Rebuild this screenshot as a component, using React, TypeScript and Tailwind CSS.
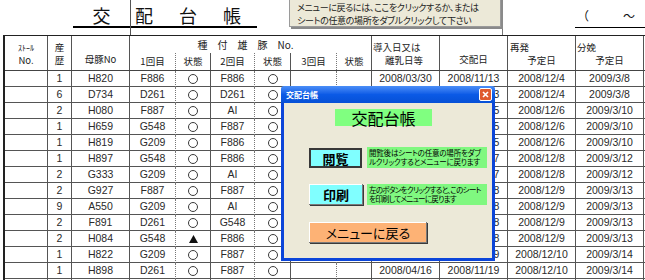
import React from 'react';

type Mark = 'o' | 't';

interface SowRow {
  parity: string;
  sow: string;
  first: string;
  firstMark: Mark;
  second: string;
  intro: string;
  mated: string;
  recheck: string;
  due: string;
}

const gridCols =
  'grid grid-cols-[43px_24px_58px_46px_35px_44px_36px_46px_35px_68px_68px_68px_68px]';

// rows 2-12 of 導入日 sit fully behind the menu dialog, so they are left blank
const sowRows: SowRow[] = [
  { parity: '1', sow: 'H820', first: 'F886', firstMark: 'o', second: 'F886', intro: '2008/03/30', mated: '2008/11/13', recheck: '2008/12/4', due: '2009/3/8' },
  { parity: '6', sow: 'D734', first: 'D261', firstMark: 'o', second: 'D261', intro: '', mated: '2008/11/13', recheck: '2008/12/4', due: '2009/3/8' },
  { parity: '2', sow: 'H080', first: 'F887', firstMark: 'o', second: 'AI', intro: '', mated: '2008/11/15', recheck: '2008/12/6', due: '2009/3/10' },
  { parity: '1', sow: 'H659', first: 'G548', firstMark: 'o', second: 'F887', intro: '', mated: '2008/11/15', recheck: '2008/12/6', due: '2009/3/10' },
  { parity: '1', sow: 'H819', first: 'G209', firstMark: 'o', second: 'F886', intro: '', mated: '2008/11/15', recheck: '2008/12/6', due: '2009/3/10' },
  { parity: '1', sow: 'H897', first: 'G548', firstMark: 'o', second: 'F886', intro: '', mated: '2008/11/17', recheck: '2008/12/8', due: '2009/3/12' },
  { parity: '2', sow: 'G333', first: 'G209', firstMark: 'o', second: 'AI', intro: '', mated: '2008/11/17', recheck: '2008/12/8', due: '2009/3/12' },
  { parity: '2', sow: 'G927', first: 'F887', firstMark: 'o', second: 'F887', intro: '', mated: '2008/11/18', recheck: '2008/12/9', due: '2009/3/13' },
  { parity: '9', sow: 'A550', first: 'G209', firstMark: 'o', second: 'AI', intro: '', mated: '2008/11/18', recheck: '2008/12/9', due: '2009/3/13' },
  { parity: '2', sow: 'F891', first: 'D261', firstMark: 'o', second: 'G548', intro: '', mated: '2008/11/18', recheck: '2008/12/9', due: '2009/3/13' },
  { parity: '2', sow: 'H084', first: 'G548', firstMark: 't', second: 'F886', intro: '', mated: '2008/11/18', recheck: '2008/12/9', due: '2009/3/13' },
  { parity: '1', sow: 'H822', first: 'G209', firstMark: 'o', second: 'F887', intro: '', mated: '2008/11/19', recheck: '2008/12/10', due: '2009/3/14' },
  { parity: '1', sow: 'H898', first: 'D261', firstMark: 'o', second: 'F887', intro: '2008/04/16', mated: '2008/11/19', recheck: '2008/12/10', due: '2009/3/14' },
];

const Circle = () => <span className="block h-[10px] w-[10px] rounded-full border border-[#3a3a3a]" />;

const Triangle = () => (
  <svg width="9" height="8" viewBox="0 0 9 8">
    <polygon points="4.5,0 9,8 0,8" fill="#111" />
  </svg>
);

const Cell: React.FC<{ children?: React.ReactNode; dotted?: boolean }> = ({ children, dotted }) => (
  <div
    className={
      dotted
        ? 'flex items-center justify-center border-r border-dotted border-[#777]'
        : 'flex items-center justify-center border-r border-[#555]'
    }
  >
    {children}
  </div>
);

const DataRow: React.FC<{ row?: SowRow }> = ({ row }) => (
  <div className={`${gridCols} h-[16px] border-b border-[#555]`}>
    <Cell />
    <Cell>{row?.parity}</Cell>
    <Cell>{row?.sow}</Cell>
    <Cell dotted>{row?.first}</Cell>
    <Cell>{row ? row.firstMark === 't' ? <Triangle /> : <Circle /> : null}</Cell>
    <Cell dotted>{row?.second}</Cell>
    <Cell>{row ? <Circle /> : null}</Cell>
    <Cell dotted />
    <Cell />
    <Cell>{row?.intro}</Cell>
    <Cell>{row?.mated}</Cell>
    <Cell>{row?.recheck}</Cell>
    <Cell>{row?.due}</Cell>
  </div>
);

const HeaderBar = () => (
  <div
    className={`${gridCols} grid-rows-[17px_17px] border-b border-[#444] font-['Noto_Sans_CJK_JP',sans-serif] text-[9.5px] leading-[13px] text-[#222] [font-feature-settings:'palt']`}
  >
    <div className="row-span-2 flex flex-col items-center border-r border-[#555] pt-[5px]">
      <span className="text-[8px]">ｽﾄｰﾙ</span>
      <span>No.</span>
    </div>
    <div className="row-span-2 flex flex-col items-center border-r border-[#555] pt-[5px]">
      <span>産</span>
      <span>歴</span>
    </div>
    <div className="row-span-2 flex flex-col items-center justify-end border-r border-[#555] pb-[4px]">
      <span>母豚No</span>
    </div>
    <div className="col-span-6 flex items-center justify-center border-r border-[#555] pr-[10px] text-[10px]">
      種　付　雄　豚　No.
    </div>
    <div className="row-span-2 flex flex-col border-r border-[#555] pt-[5px]">
      <span className="pl-[1px]">導入日又は</span>
      <span className="pl-[13px]">離乳日等</span>
    </div>
    <div className="row-span-2 flex flex-col items-center justify-end border-r border-[#555] pb-[4px]">
      <span>交配日</span>
    </div>
    <div className="row-span-2 flex flex-col border-r border-[#555] pt-[5px]">
      <span className="pl-[2px]">再発</span>
      <span className="self-center">予定日</span>
    </div>
    <div className="row-span-2 flex flex-col border-r border-[#555] pt-[5px]">
      <span className="pl-[1px]">分娩</span>
      <span className="self-center">予定日</span>
    </div>
    <div className="col-start-4 row-start-2 flex items-center justify-center border-r border-dotted border-[#777]">1回目</div>
    <div className="flex items-center justify-center border-r border-[#555]">状態</div>
    <div className="flex items-center justify-center border-r border-dotted border-[#777]">2回目</div>
    <div className="flex items-center justify-center border-r border-[#555]">状態</div>
    <div className="flex items-center justify-center border-r border-dotted border-[#777]">3回目</div>
    <div className="flex items-center justify-center border-r border-[#555]">状態</div>
  </div>
);

const TitleRow = () => (
  <div className="flex h-[35px] font-['Noto_Sans_CJK_JP',sans-serif] text-[#111]">
    <div className="w-[73px]" />
    <div className="w-[57px] pt-[5px]">
      <div className="flex h-[23px] items-center justify-center border-b-2 border-black text-[18px]">交</div>
    </div>
    <div className="w-[127px] border-l border-[#555] pt-[5px]">
      <div className="flex h-[23px] items-center gap-[26px] border-b-2 border-black pl-[4px] text-[18px]">
        <span>配</span>
        <span>台</span>
        <span>帳</span>
      </div>
    </div>
    <div className="w-[246px] border-r border-[#777]" />
    <div className="flex-1 pl-[72px] pt-[5px]">
      <div className="flex h-[23px] items-center border-b border-black text-[12px]">
        <span className="ml-[2px]">（</span>
        <span className="ml-[34px]">～</span>
      </div>
    </div>
  </div>
);

const Hint = () => (
  <div className="absolute left-[289px] top-[-2px] h-[29px] w-[212px] border border-[#9a9a9a] bg-[#ece9d8] pl-[7px] pt-[2px] font-['Noto_Sans_CJK_JP',sans-serif] text-[9px] leading-[13px] tracking-[-0.35px] text-[#222] shadow-[2px_2px_0_#8a8a8a] [font-feature-settings:'palt']">
    <div className="whitespace-nowrap">メニューに戻るには、ここをクリックするか、または</div>
    <div className="whitespace-nowrap">シートの任意の場所をダブルクリックして下さい</div>
  </div>
);

const raised = 'shadow-[inset_-1px_-1px_0_#7a7a7a,inset_1px_1px_0_#ffffff,1px_1px_0_#3a3a3a]';

const MenuDialog = () => (
  <div className="absolute left-[281px] top-[86px] flex h-[175px] w-[214px] flex-col font-['Noto_Sans_CJK_JP',sans-serif] [font-feature-settings:'palt']">
    <div className="flex h-[17px] items-center justify-between rounded-t-[3px] bg-linear-to-b from-[#4a8ef7] via-[#0b5ae6] to-[#0650d6] pl-[5px] pr-[3px]">
      <span className="text-[8px] font-bold text-white">交配台帳</span>
      <span className="flex h-[13px] w-[13px] items-center justify-center rounded-[2px] border border-white bg-[#df5a2e]">
        <svg width="7" height="7" viewBox="0 0 7 7">
          <path d="M1 1 L6 6 M6 1 L1 6" stroke="#fff" strokeWidth="1.6" />
        </svg>
      </span>
    </div>
    <div className="flex-1 border-x-[3px] border-b-[3px] border-[#0b45d9] bg-[#ece9d8] pt-[6px] text-black">
      <div className="ml-[51px] flex h-[17px] w-[97px] items-center justify-center bg-[#80ff80] text-[16px] leading-none">
        交配台帳
      </div>
      <div className="mt-[21px] flex items-start gap-[5px] pl-[25px]">
        <div className="mt-[1px] flex h-[20px] w-[53px] items-center justify-center border-2 border-[#383838] bg-[#80ffff] text-[13px] font-bold leading-none">
          閲覧
        </div>
        <div className="h-[21px] w-[120px] overflow-hidden whitespace-nowrap bg-[#80f880] pl-[2px] pt-[2px] text-[7.5px] leading-[8.5px] tracking-[-0.2px]">
          <div>閲覧後はシートの任意の場所をダブ</div>
          <div>ルクリックするとメニューに戻ります</div>
        </div>
      </div>
      <div className="mt-[16px] flex items-start gap-[4px] pl-[25px]">
        <div className={`flex h-[21px] w-[54px] items-center justify-center bg-[#80ffff] text-[13px] font-bold leading-none ${raised}`}>
          印刷
        </div>
        <div className="h-[21px] w-[120px] overflow-hidden whitespace-nowrap bg-[#80f880] pl-[2px] pt-[2px] text-[7.5px] leading-[8.5px] tracking-[-0.7px]">
          <div>左のボタンをクリックすると、このシート</div>
          <div>を印刷してメニューに戻ります</div>
        </div>
      </div>
      <div className="mt-[17px] pl-[25px]">
        <div className={`flex h-[21px] w-[118px] items-center justify-center bg-[#fdb275] text-[13px] leading-none ${raised}`}>
          メニューに戻る
        </div>
      </div>
    </div>
  </div>
);

export default function App() {
  return (
    <div className="relative h-[280px] w-[645px] overflow-hidden bg-white font-['Liberation_Sans','Noto_Sans_CJK_JP',sans-serif] text-[10.5px] text-[#2a2a2a]">
      <TitleRow />
      <div className="ml-[3px] border-l-2 border-t border-[#222]">
        <HeaderBar />
        {sowRows.map((row) => (
          <DataRow key={row.sow} row={row} />
        ))}
        <DataRow />
      </div>
      <Hint />
      <MenuDialog />
    </div>
  );
}
